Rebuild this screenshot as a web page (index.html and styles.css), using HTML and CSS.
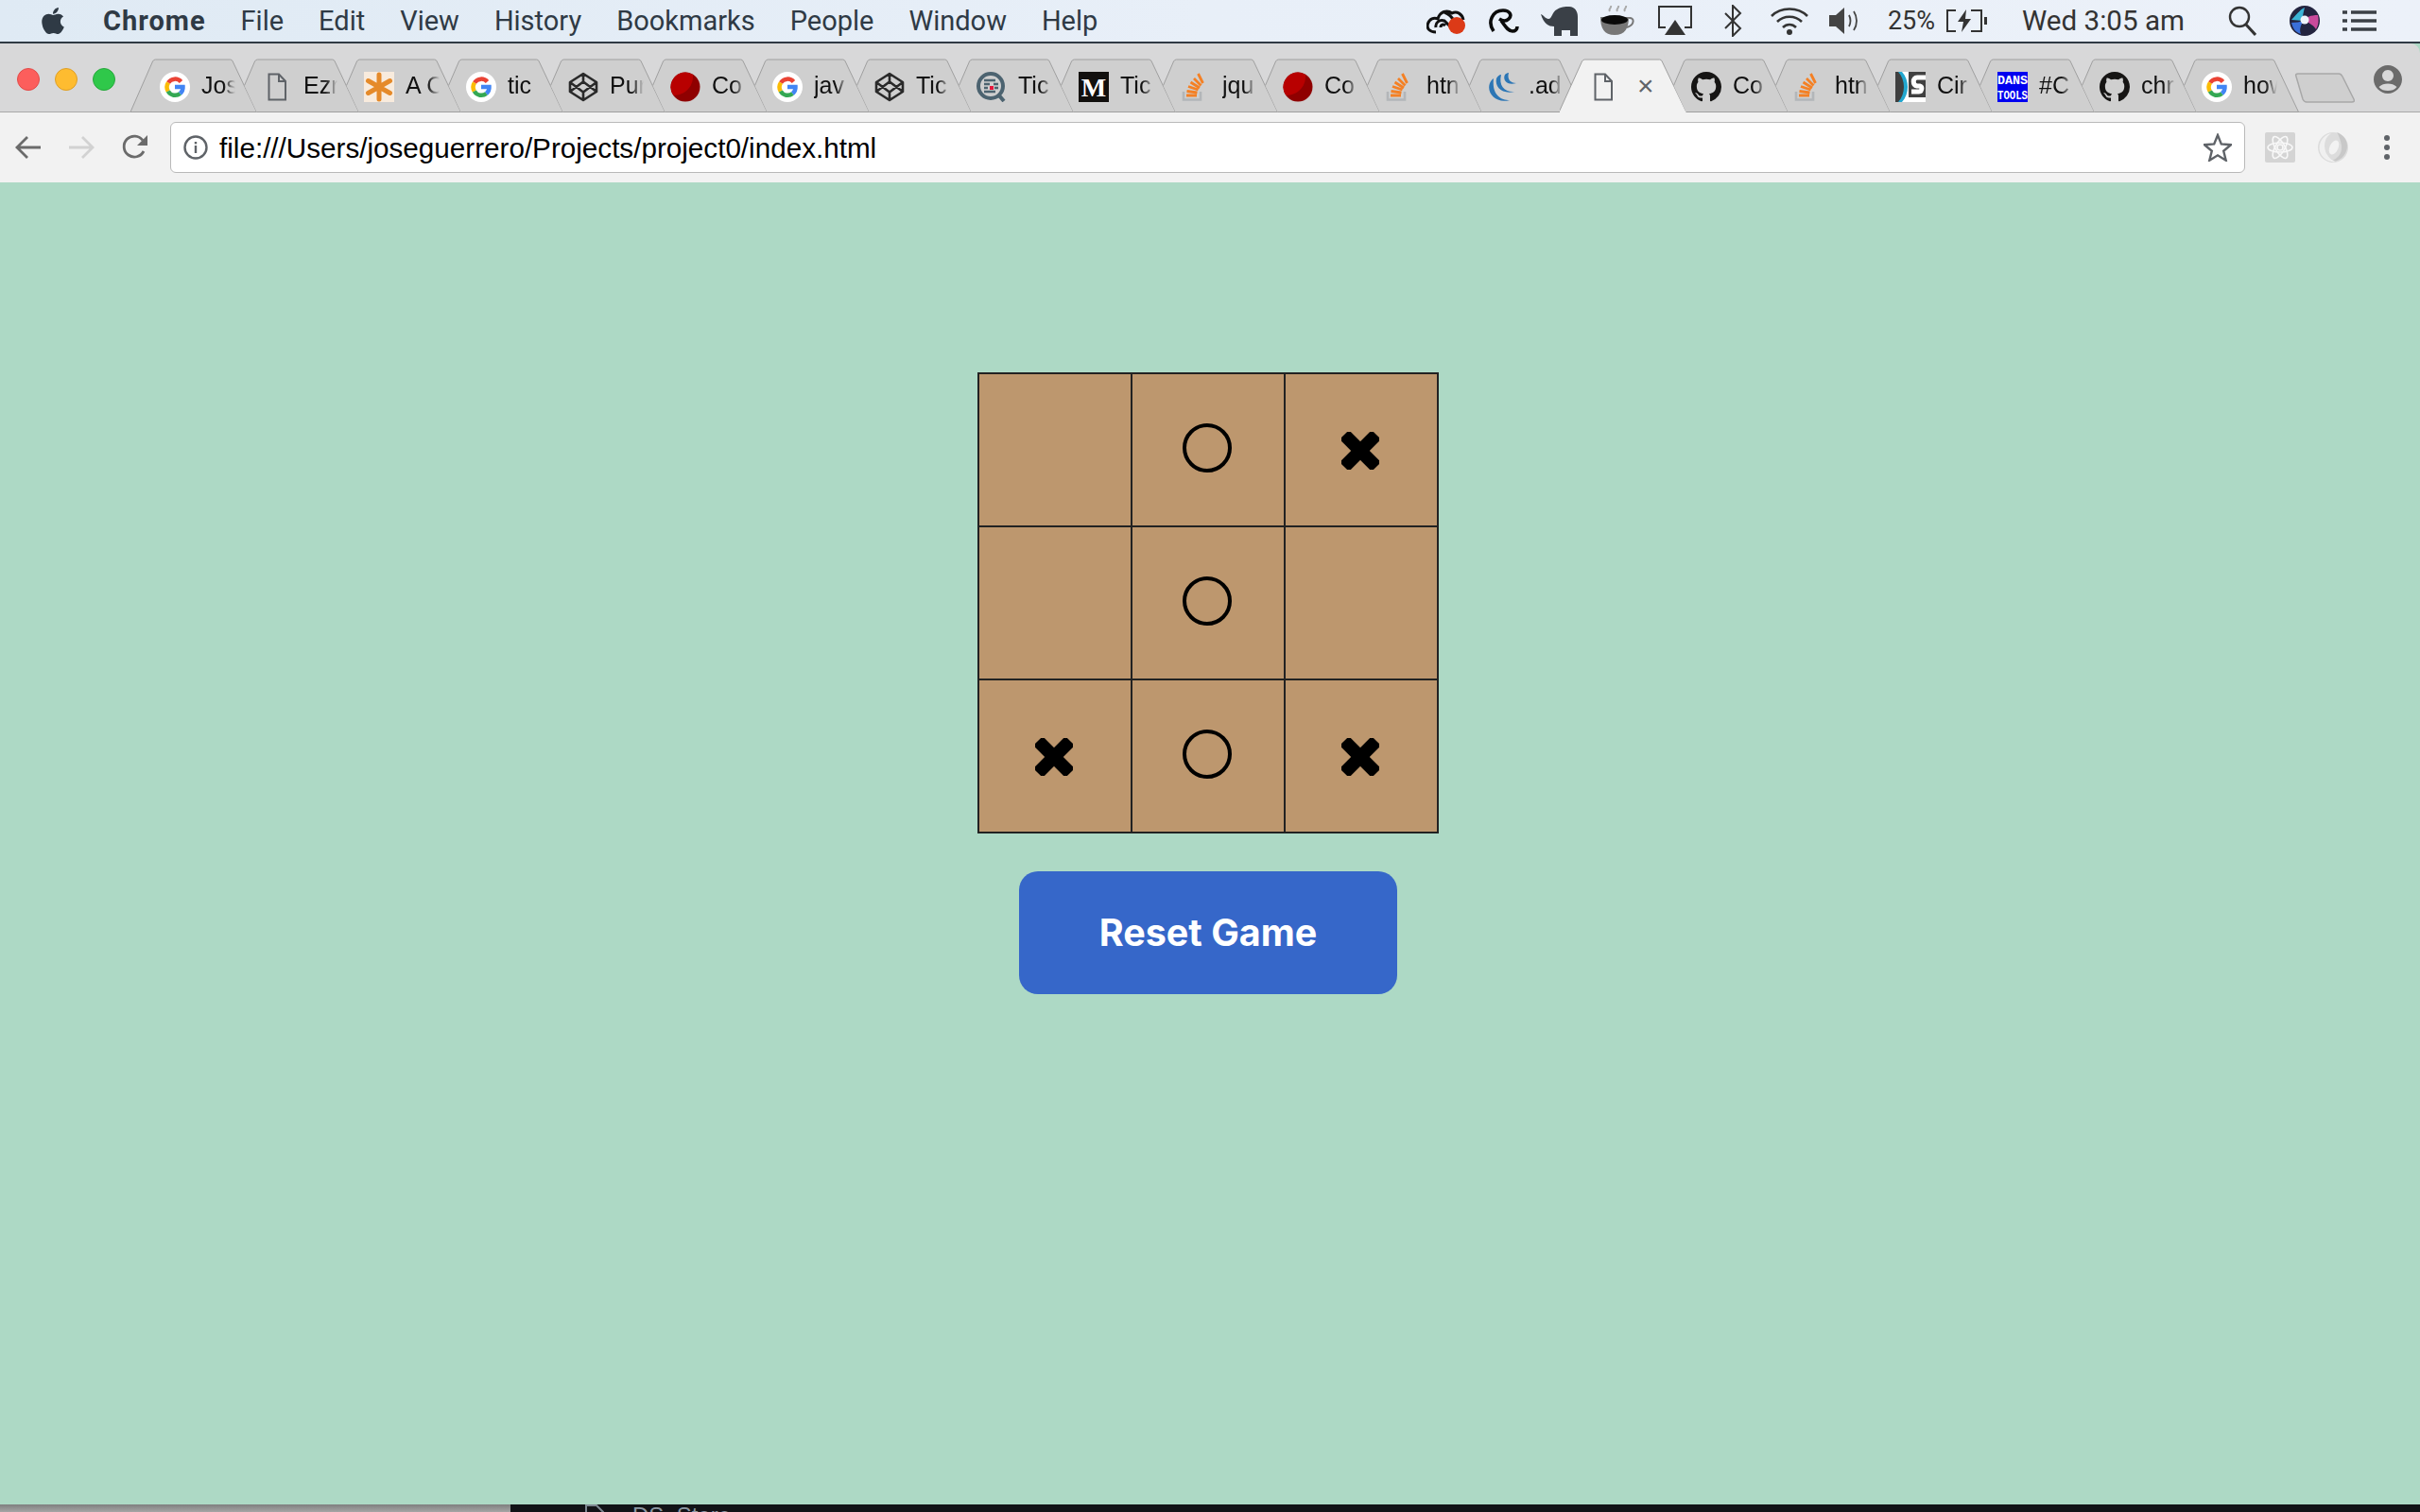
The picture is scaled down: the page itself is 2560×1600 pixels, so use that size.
FILE: index.html
```html
<!DOCTYPE html>
<html lang="en">
  <head>
    <meta charset="UTF-8" />
    <title>Tic Tac Toe</title>
    <link rel="stylesheet" href="styles.css">
  </head>
  <body>
    <svg class="icon-defs" width="0" height="0">
      <symbol id="tab-first" viewBox="0 0 134 57" preserveAspectRatio="none">
        <path d="M0 56.500L23.500 3Q24.500 1 26.500 1H105.500Q107.500 1 108.200 3L133.500 56.500Z" fill="#cfcfcf" stroke="#9f9f9f"/>
      </symbol>
      <symbol id="tab-normal" viewBox="0 0 134 57" preserveAspectRatio="none">
        <path d="M25.500 56.500L12.500 28.500L23.500 3Q24.500 1 26.500 1H105.500Q107.500 1 108.200 3L133.500 56.500Z" fill="#cfcfcf"/>
        <path d="M12.500 28.500L23.500 3Q24.500 1 26.500 1H105.500Q107.500 1 108.200 3L133.500 56.500H25.500" fill="none" stroke="#9f9f9f"/>
      </symbol>
      <symbol id="tab-active" viewBox="0 0 134 57" preserveAspectRatio="none">
        <path d="M-1 57L23.500 3Q24.500 1 26.500 1H105.500Q107.500 1 108.200 3L134 57Z" fill="#f2f2f2" stroke="#9f9f9f"/>
        <rect x="-1" y="55.500" width="136" height="2" fill="#f2f2f2"/>
      </symbol>
      <symbol id="fav-g" viewBox="0 0 32 32">
        <circle cx="16" cy="16" r="16" fill="#fff"/>
        <path d="M9 11.500A8.500 8.500 0 0 1 22.500 10.500" fill="none" stroke="#ea4335" stroke-width="4.500"/>
        <path d="M9 11.500A8.500 8.500 0 0 0 8.800 20.500" fill="none" stroke="#fbbc05" stroke-width="4.500"/>
        <path d="M8.800 20.500A8.500 8.500 0 0 0 21.500 23" fill="none" stroke="#34a853" stroke-width="4.500"/>
        <path d="M21.500 23A8.500 8.500 0 0 0 24.500 16H16" fill="none" stroke="#4285f4" stroke-width="4.500"/>
      </symbol>
      <symbol id="fav-doc" viewBox="0 0 32 32">
        <path d="M7.500 2.500H18L25 10V29.500H7.500ZM18 2.500V10H25" fill="none" stroke="#5f6368" stroke-width="2"/>
      </symbol>
      <symbol id="fav-star" viewBox="0 0 32 32">
        <rect width="32" height="32" fill="#f8ebdd"/>
        <path d="M16 3V29M4.500 9.500L27.500 22.500M27.500 9.500L4.500 22.500" stroke="#e58a2a" stroke-width="5" stroke-linecap="round"/>
      </symbol>
      <symbol id="fav-pen" viewBox="0 0 32 32">
        <path d="M16 2L30 11V21L16 30L2 21V11ZM16 2V10.500M16 21.500V30M2 11L16 21.500L30 11M2 21L16 10.500L30 21" fill="none" stroke="#2a2a2a" stroke-width="2.600" stroke-linejoin="round"/>
      </symbol>
      <symbol id="fav-red" viewBox="0 0 32 32">
        <circle cx="16" cy="16" r="15.500" fill="#8f0000"/>
        <path d="M16 .500A15.500 15.500 0 0 0 3.500 25C16 25 25 15 24 3A15.500 15.500 0 0 0 16 .500Z" fill="#b80000"/>
      </symbol>
      <symbol id="fav-quick" viewBox="0 0 32 32">
        <circle cx="15" cy="15" r="13" fill="none" stroke="#4c6370" stroke-width="4"/>
        <path d="M23 24L29 31" stroke="#4c6370" stroke-width="4"/>
        <path d="M8 9H20M8 13H14M18 13H23M8 17H12M19 17H23M8 21H20" stroke="#4c6370" stroke-width="2.500"/>
        <rect x="14" y="15" width="4" height="4" fill="#e6173d"/>
      </symbol>
      <symbol id="fav-so" viewBox="0 0 32 32">
        <path d="M3 21V29.500H21V21" fill="none" stroke="#b3b6b9" stroke-width="2.600"/>
        <path d="M6 25H17M6.500 20.500L17.500 22M8 15.500L18.500 19M10.500 11L20 17M14 7L21.500 14.500M18.500 2L23.500 12" stroke="#f48024" stroke-width="2.800"/>
      </symbol>
      <symbol id="fav-jq" viewBox="0 0 32 32">
        <path d="M3 12C-1 23 10 34 24 30C14 30 5 24 7 7C5 8 4 10 3 12Z" fill="#2c76b5"/>
        <path d="M10 7C8 16 16 24 29 21C19 22 12 15 15 3C13 3 11 5 10 7Z" fill="#2c76b5"/>
        <path d="M19 3C16 9 22 15 31 12C25 12 21 8 23 1C21 1 20 2 19 3Z" fill="#2c76b5"/>
      </symbol>
      <symbol id="fav-gh" viewBox="0 0 16 16">
        <path d="M8 0C3.580 0 0 3.580 0 8c0 3.540 2.290 6.530 5.470 7.590.4.070.55-.17.55-.38 0-.19-.01-.82-.01-1.490-2.010.37-2.530-.49-2.690-.94-.09-.23-.48-.94-.82-1.130-.28-.15-.68-.52-.01-.53.63-.01 1.080.58 1.230.82.72 1.210 1.870.87 2.330.66.070-.52.28-.87.51-1.070-1.780-.2-3.640-.89-3.640-3.950 0-.87.31-1.590.82-2.150-.08-.2-.36-1.020.08-2.120 0 0 .67-.21 2.200.82.64-.18 1.320-.27 2-.27.68 0 1.360.09 2 .27 1.530-1.040 2.200-.82 2.200-.82.44 1.100.16 1.920.08 2.120.51.56.82 1.270.82 2.150 0 3.070-1.870 3.750-3.650 3.950.29.25.54.73.54 1.480 0 1.070-.01 1.930-.01 2.200 0 .21.15.46.55.38A8.013 8.013 0 0016 8c0-4.420-3.580-8-8-8z" fill="#161514"/>
      </symbol>
      <symbol id="fav-cs" viewBox="0 0 32 32">
        <rect width="32" height="32" fill="#fff"/>
        <rect x="14" width="18" height="27" fill="#404040"/>
        <path d="M0 0H5C12 9 12 23 5 32H0Z" fill="#404040"/>
        <path d="M3 0H7C15 9 15 23 7 32H3C11 23 11 9 3 0Z" fill="#22a7cf"/>
        <path d="M32 6H23C18 6 18 14 23 15H26C29 16 28 21 25 21H17" fill="none" stroke="#fff" stroke-width="5"/>
      </symbol>
      <symbol id="mark-x" viewBox="0 0 40 40">
        <rect x="-4" y="13" width="48" height="14" rx="3" transform="rotate(45 20 20)"/>
        <rect x="-4" y="13" width="48" height="14" rx="3" transform="rotate(-45 20 20)"/>
      </symbol>
    </svg>

    <header class="menubar">
      <svg class="apple" viewBox="0 0 384 512"><path d="M318.700 268.700c-.2-36.700 16.400-64.400 50-84.800-18.800-26.900-47.200-41.700-84.700-44.600-35.500-2.800-74.300 20.700-88.500 20.700-15 0-49.400-19.700-76.400-19.700C63.300 141.200 4 184.800 4 273.500q0 39.300 14.400 81.200c12.800 36.700 59 126.700 107.200 125.200 25.200-.6 43-17.900 75.800-17.900 31.800 0 48.300 17.900 76.400 17.900 48.600-.7 90.400-82.500 102.600-119.300-65.200-30.700-61.700-90-61.700-91.900zm-56.600-164.200c27.300-32.400 24.800-61.900 24-72.500-24.100 1.400-52 16.400-67.900 34.900-17.500 19.800-27.800 44.300-25.600 71.900 26.100 2 49.900-11.400 69.500-34.300z"/></svg>
      <nav class="menu">
        <span class="menu-app">Chrome</span>
        <span>File</span>
        <span>Edit</span>
        <span>View</span>
        <span>History</span>
        <span>Bookmarks</span>
        <span>People</span>
        <span>Window</span>
        <span>Help</span>
      </nav>
      <div class="status">
        <svg class="st st-cloud" viewBox="0 0 42 28">
          <path d="M10 26C3 26 0 22 1.500 17C3 12 8 10 12 12C14 4 22 2 27 6C32 3 38 7 39 13M10 21C9 16 14 12 19 14L26 21M15 21C15 18 18 17 20 19M19 5C24 7 27 10 29 14" fill="none" stroke="#111" stroke-width="3"/>
          <circle cx="32" cy="19" r="9" fill="#dc3a17"/>
        </svg>
        <svg class="st st-avast" viewBox="0 0 34 26">
          <path d="M7 24C0 14 6 2 17 2C24 2 27 7 23 11C20 14 16 13 13 11M15 13C19 18 22 24 27 24C30 24 32 22 32 19" fill="none" stroke="#0b0b0b" stroke-width="3.600"/>
        </svg>
        <svg class="st st-elephant" viewBox="0 0 40 31">
          <path d="M0 8C3 9 5 13 8 13C12 13 12 5 17 3C20 .500 26 0 30 0C36 0 39 5 39 11V31H31V25H22V31H14V21C8 21 3 18 0 8Z" fill="#3a4047"/>
        </svg>
        <svg class="st st-coffee" viewBox="0 0 38 32">
          <path d="M11 6C9 3 13 3 12 0M19 6C17 3 21 3 20 0M27 6C25 3 29 3 28 0" fill="none" stroke="#aaa" stroke-width="2"/>
          <path d="M1 12H31C31 24 27 31 16 31C5 31 1 24 1 12Z" fill="#777"/>
          <ellipse cx="16" cy="15" rx="14" ry="5" fill="#0a0a0a"/>
          <path d="M31 13C37 12 38 20 29 23" fill="none" stroke="#777" stroke-width="2"/>
        </svg>
        <svg class="st st-airplay" viewBox="0 0 36 32">
          <path d="M8 23H1V1H35V23H28" fill="none" stroke="#333" stroke-width="2"/>
          <path d="M18 15L29 31H7Z" fill="#333"/>
        </svg>
        <svg class="st st-bt" viewBox="0 0 20 34">
          <path d="M2 9L18 25L10 33V1L18 9L2 25" fill="none" stroke="#333" stroke-width="2"/>
        </svg>
        <svg class="st st-wifi" viewBox="0 0 42 32">
          <path d="M2 11C12 1 30 1 40 11M8 17C15 10 27 10 34 17M14 23C18 19 24 19 28 23" fill="none" stroke="#333" stroke-width="2.600"/>
          <circle cx="21" cy="28" r="3" fill="#333"/>
        </svg>
        <svg class="st st-vol" viewBox="0 0 34 30">
          <path d="M1 9H8L17 1V29L8 21H1Z" fill="#444"/>
          <path d="M22 9C24 13 24 17 22 21M27 5C31 11 31 19 27 25" fill="none" stroke="#444" stroke-width="1.800"/>
        </svg>
        <span class="st-pct">25%</span>
        <svg class="st st-batt" viewBox="0 0 46 24">
          <path d="M11 1H2V23H11M27 1H38V23H27" fill="none" stroke="#333" stroke-width="2"/>
          <path d="M22 0L13 13H19L17 24L27 10H21Z" fill="#333"/>
          <rect x="41" y="8" width="3" height="8" fill="#333"/>
        </svg>
        <span class="st-time">Wed 3:05 am</span>
        <svg class="st st-search" viewBox="0 0 30 32">
          <circle cx="12" cy="12" r="10" fill="none" stroke="#333" stroke-width="2.400"/>
          <path d="M19 20L29 31" stroke="#333" stroke-width="3"/>
        </svg>
        <svg class="st st-siri" viewBox="0 0 32 32">
          <circle cx="16" cy="16" r="16" fill="#23243f"/>
          <path d="M2 15C10 6 12 4 16 2C14 10 13 14 15 16Z" fill="#3bb4d6"/>
          <path d="M30 10C22 10 18 12 15 16C22 18 26 22 28 25C31 20 31 15 30 10Z" fill="#c94a9b"/>
          <path d="M15 16C12 20 10 25 12 30C5 28 3 22 2 18C7 18 11 17 15 16Z" fill="#3a6fd8"/>
          <circle cx="16" cy="15" r="4.500" fill="#eef4fa"/>
        </svg>
        <svg class="st st-list" viewBox="0 0 36 24">
          <path d="M9 3H36M9 12H36M9 21H36" stroke="#3b4046" stroke-width="3.600"/>
          <path d="M0 3H5M0 12H5M0 21H5" stroke="#3b4046" stroke-width="3.600"/>
        </svg>
      </div>
    </header>

    <div class="tabstrip">
      <div class="lights">
        <i class="light light-red"></i>
        <i class="light light-yellow"></i>
        <i class="light light-green"></i>
      </div>
      <div class="tab"><svg class="tab-shape"><use href="#tab-first"/></svg><svg class="fav"><use href="#fav-g"/></svg><span class="tab-label">Jos</span></div>
      <div class="tab"><svg class="tab-shape"><use href="#tab-normal"/></svg><svg class="fav"><use href="#fav-doc"/></svg><span class="tab-label">Ezr</span></div>
      <div class="tab"><svg class="tab-shape"><use href="#tab-normal"/></svg><svg class="fav"><use href="#fav-star"/></svg><span class="tab-label">A C</span></div>
      <div class="tab"><svg class="tab-shape"><use href="#tab-normal"/></svg><svg class="fav"><use href="#fav-g"/></svg><span class="tab-label">tic</span></div>
      <div class="tab"><svg class="tab-shape"><use href="#tab-normal"/></svg><svg class="fav"><use href="#fav-pen"/></svg><span class="tab-label">Pur</span></div>
      <div class="tab"><svg class="tab-shape"><use href="#tab-normal"/></svg><svg class="fav"><use href="#fav-red"/></svg><span class="tab-label">Co</span></div>
      <div class="tab"><svg class="tab-shape"><use href="#tab-normal"/></svg><svg class="fav"><use href="#fav-g"/></svg><span class="tab-label">jav</span></div>
      <div class="tab"><svg class="tab-shape"><use href="#tab-normal"/></svg><svg class="fav"><use href="#fav-pen"/></svg><span class="tab-label">Tic</span></div>
      <div class="tab"><svg class="tab-shape"><use href="#tab-normal"/></svg><svg class="fav"><use href="#fav-quick"/></svg><span class="tab-label">Tic</span></div>
      <div class="tab"><svg class="tab-shape"><use href="#tab-normal"/></svg><svg class="fav" viewBox="0 0 32 32"><rect width="32" height="32" fill="#12100e"/><text x="16" y="26" text-anchor="middle" class="medium-m">M</text></svg><span class="tab-label">Tic</span></div>
      <div class="tab"><svg class="tab-shape"><use href="#tab-normal"/></svg><svg class="fav"><use href="#fav-so"/></svg><span class="tab-label">jqu</span></div>
      <div class="tab"><svg class="tab-shape"><use href="#tab-normal"/></svg><svg class="fav"><use href="#fav-red"/></svg><span class="tab-label">Co</span></div>
      <div class="tab"><svg class="tab-shape"><use href="#tab-normal"/></svg><svg class="fav"><use href="#fav-so"/></svg><span class="tab-label">htn</span></div>
      <div class="tab"><svg class="tab-shape"><use href="#tab-normal"/></svg><svg class="fav"><use href="#fav-jq"/></svg><span class="tab-label">.ad</span></div>
      <div class="tab tab-current"><svg class="tab-shape"><use href="#tab-active"/></svg><svg class="fav"><use href="#fav-doc"/></svg><span class="tab-close">×</span></div>
      <div class="tab"><svg class="tab-shape"><use href="#tab-normal"/></svg><svg class="fav"><use href="#fav-gh"/></svg><span class="tab-label">Co</span></div>
      <div class="tab"><svg class="tab-shape"><use href="#tab-normal"/></svg><svg class="fav"><use href="#fav-so"/></svg><span class="tab-label">htn</span></div>
      <div class="tab"><svg class="tab-shape"><use href="#tab-normal"/></svg><svg class="fav"><use href="#fav-cs"/></svg><span class="tab-label">Cir</span></div>
      <div class="tab"><svg class="tab-shape"><use href="#tab-normal"/></svg><svg class="fav" viewBox="0 0 32 32"><rect width="32" height="32" fill="#0000f0"/><text x="0" y="13" textLength="32" lengthAdjust="spacingAndGlyphs" class="dans-text">DANS</text><text x="0" y="29" textLength="32" lengthAdjust="spacingAndGlyphs" class="dans-text">TOOLS</text></svg><span class="tab-label">#C</span></div>
      <div class="tab"><svg class="tab-shape"><use href="#tab-normal"/></svg><svg class="fav"><use href="#fav-gh"/></svg><span class="tab-label">chr</span></div>
      <div class="tab"><svg class="tab-shape"><use href="#tab-normal"/></svg><svg class="fav"><use href="#fav-g"/></svg><span class="tab-label">how</span></div>
      <svg class="newtab" viewBox="0 0 64 32"><path d="M2 4C1 2 2 1 4 1H47C49 1 50 2 51 4L63 28C64 30 63 31 61 31H13C11 31 10 30 9 28Z" fill="#cfcfcf" stroke="#a8a8a8" stroke-width="1.500"/></svg>
      <svg class="profile" viewBox="0 0 30 30"><path d="M15 0C23 0 30 7 30 15C30 23 23 30 15 30C7 30 0 23 0 15C0 7 7 0 15 0ZM15 5C11.500 5 9 8 9 11C9 14 11.500 17 15 17C18.500 17 21 14 21 11C21 8 18.500 5 15 5ZM5.500 23C8 26 11 27 15 27C19 27 22 26 24.500 23C22 20.500 18.500 19.500 15 19.500C11.500 19.500 8 20.500 5.500 23Z" fill="#6b6b6b"/></svg>
    </div>

    <div class="toolbar">
      <svg class="tool tool-back" viewBox="0 0 28 26"><path d="M27 13H3M13 2L2 13L13 24" fill="none" stroke="#6b6b6b" stroke-width="2.800"/></svg>
      <svg class="tool tool-forward" viewBox="0 0 28 26"><path d="M1 13H25M15 2L26 13L15 24" fill="none" stroke="#d2d2d2" stroke-width="2.800"/></svg>
      <svg class="tool tool-reload" viewBox="0 0 28 28"><path d="M23 18A11 11 0 1 1 22 6.500" fill="none" stroke="#6b6b6b" stroke-width="2.800"/><path d="M27 1V12H16Z" fill="#6b6b6b"/></svg>
      <div class="urlbar">
        <svg class="url-info" viewBox="0 0 26 26">
          <circle cx="13" cy="13" r="11.500" fill="none" stroke="#5f6368" stroke-width="2.400"/>
          <rect x="11.800" y="11" width="2.400" height="8" fill="#5f6368"/>
          <rect x="11.800" y="7" width="2.400" height="2.400" fill="#5f6368"/>
        </svg>
        <span class="url-text">file:///Users/joseguerrero/Projects/project0/index.html</span>
        <svg class="url-star" viewBox="0 0 30 30"><path d="M15 2L18.800 11.400L29 12.200L21.200 18.800L23.700 28.700L15 23.300L6.300 28.700L8.800 18.800L1 12.200L11.200 11.400Z" fill="none" stroke="#5f6368" stroke-width="2.400"/></svg>
      </div>
      <svg class="ext ext-react" viewBox="0 0 32 32">
        <rect width="32" height="32" rx="2" fill="#d4d4d4"/>
        <g fill="none" stroke="#f8f8f8" stroke-width="1.600">
          <ellipse cx="16" cy="16" rx="13" ry="5"/>
          <ellipse cx="16" cy="16" rx="13" ry="5" transform="rotate(60 16 16)"/>
          <ellipse cx="16" cy="16" rx="13" ry="5" transform="rotate(120 16 16)"/>
        </g>
        <circle cx="16" cy="16" r="3" fill="none" stroke="#f8f8f8" stroke-width="1.600"/>
      </svg>
      <svg class="ext ext-ring" viewBox="0 0 32 32">
        <circle cx="16" cy="16" r="16" fill="#dcdcdc"/>
        <path d="M20 0C29 3 33 12 30 20C27 28 19 32 12 31C20 29 26 23 25 14C24 8 22 3 20 0Z" fill="#c8c8c8"/>
        <path d="M2 20C0 12 5 3 14 1C7 6 6 13 8 20C10 26 15 30 19 31C11 32 4 27 2 20Z" fill="#f0f0f0"/>
        <ellipse cx="17" cy="16" rx="4.500" ry="8" fill="#f2f2f2" transform="rotate(25 17 16)"/>
      </svg>
      <svg class="tool-menu" viewBox="0 0 8 28"><circle cx="4" cy="4" r="3" fill="#5f6368"/><circle cx="4" cy="14" r="3" fill="#5f6368"/><circle cx="4" cy="24" r="3" fill="#5f6368"/></svg>
    </div>

    <main class="page">
      <div class="board">
        <div class="cell"></div>
        <div class="cell"><svg class="mark-o" viewBox="0 0 52 52"><circle cx="26" cy="26" r="24" /></svg></div>
        <div class="cell"><svg class="mark-x"><use href="#mark-x"/></svg></div>
        <div class="cell"></div>
        <div class="cell"><svg class="mark-o" viewBox="0 0 52 52"><circle cx="26" cy="26" r="24" /></svg></div>
        <div class="cell"></div>
        <div class="cell"><svg class="mark-x"><use href="#mark-x"/></svg></div>
        <div class="cell"><svg class="mark-o" viewBox="0 0 52 52"><circle cx="26" cy="26" r="24" /></svg></div>
        <div class="cell"><svg class="mark-x"><use href="#mark-x"/></svg></div>
      </div>
      <button class="reset" type="button">Reset Game</button>
    </main>

    <footer class="under">
      <div class="under-thumb"></div>
      <div class="under-file">
        <svg class="under-icon" viewBox="0 0 20 24"><path d="M1 1H12L19 8V23H1Z" fill="none" stroke="#7d8791" stroke-width="2"/></svg>
        <span>DS_Store</span>
      </div>
    </footer>
  </body>
</html>
```

FILE: styles.css
```css
* {
  box-sizing: border-box;
}
html,
body {
  margin: 0;
  height: 100%;
}
body {
  display: flex;
  flex-direction: column;
  height: 1600px;
  overflow: hidden;
  background-color: #add9c5;
  font-family: "Liberation Sans", Arial, sans-serif;
}
.icon-defs {
  display: block;
  width: 0;
  height: 0;
  flex: none;
}
.medium-m {
  font: bold 28px "Liberation Serif", serif;
  fill: #fff;
}
.dans-text {
  font: bold 13px "Liberation Mono", monospace;
  fill: #fff;
}

/* mac menu bar */
.menubar {
  display: flex;
  align-items: center;
  flex: none;
  height: 46px;
  padding: 0 46px 0 43px;
  border-bottom: 2px solid #303a44;
  background: linear-gradient(90deg, #dfeaf4, #e8eff8 50%, #ecf1f9);
  color: #2f3a45;
  font-family: Roboto, sans-serif;
  font-size: 29px;
}
.apple {
  width: 26px;
  height: 32px;
  fill: #2f3a45;
}
.menu {
  display: flex;
  gap: 37px;
  margin-left: 40px;
}
.menu-app {
  font-weight: 700;
  letter-spacing: 1px;
}
.status {
  display: flex;
  align-items: center;
  margin-left: auto;
  color: #333;
}
.st {
  display: block;
  flex: none;
}
.st-cloud { width: 42px; height: 28px; }
.st-avast { width: 34px; height: 26px; margin-left: 22px; }
.st-elephant { width: 40px; height: 31px; margin-left: 23px; }
.st-coffee { width: 38px; height: 32px; margin-left: 22px; filter: blur(.6px); }
.st-airplay { width: 36px; height: 32px; margin-left: 24px; }
.st-bt { width: 20px; height: 34px; margin-left: 33px; }
.st-wifi { width: 42px; height: 32px; margin-left: 29px; }
.st-vol { width: 34px; height: 30px; margin-left: 20px; }
.st-pct {
  margin-left: 29px;
  font-size: 27px;
}
.st-batt { width: 46px; height: 24px; margin-left: 11px; }
.st-time {
  margin-left: 35px;
  font-size: 29.600px;
}
.st-search { width: 30px; height: 32px; margin-left: 46px; }
.st-siri { width: 32px; height: 32px; margin-left: 35px; }
.st-list { width: 36px; height: 24px; margin-left: 24px; }

/* tab strip */
.tabstrip {
  display: flex;
  align-items: flex-end;
  flex: none;
  height: 73px;
  border-bottom: 1px solid #a9a9a9;
  border-top-right-radius: 10px;
  background-color: #d8d8d9;
}
.lights {
  display: flex;
  align-self: flex-start;
  flex: none;
  gap: 16px;
  width: 138px;
  padding: 26px 0 0 18px;
}
.light {
  display: block;
  width: 24px;
  height: 24px;
  border-radius: 50%;
}
.light-red { background-color: #fc5e5c; border: 1px solid #e24b49; }
.light-yellow { background-color: #febc30; border: 1px solid #de9f26; }
.light-green { background-color: #2fc84a; border: 1px solid #27a83c; }
.tab {
  position: relative;
  display: flex;
  align-items: center;
  flex: none;
  width: 134px;
  height: 57px;
  margin-left: -26px;
  margin-bottom: -1px;
  padding-left: 31px;
  color: #111;
  font-size: 25px;
}
.lights + .tab {
  margin-left: 0;
}
.tab-shape {
  position: absolute;
  left: 0;
  top: 0;
  width: 134px;
  height: 57px;
  overflow: visible;
}
.fav {
  position: relative;
  flex: none;
  width: 32px;
  height: 32px;
  margin-top: 2px;
}
.tab-label {
  position: relative;
  width: 36px;
  margin-left: 12px;
  overflow: hidden;
  white-space: nowrap;
  -webkit-mask-image: linear-gradient(90deg, #000 65%, transparent);
  mask-image: linear-gradient(90deg, #000 65%, transparent);
}
.tab-current {
  padding-left: 30px;
}
.tab-close {
  position: relative;
  margin-left: 20px;
  color: #5f6368;
  font-size: 30px;
  line-height: 1;
}
.newtab {
  flex: none;
  width: 64px;
  height: 32px;
  margin: 0 0 9px -5px;
}
.profile {
  flex: none;
  align-self: flex-start;
  width: 30px;
  height: 30px;
  margin: 23px 0 0 20px;
}

/* toolbar */
.toolbar {
  display: flex;
  align-items: center;
  flex: none;
  height: 74px;
  background-color: #f2f2f2;
}
.tool {
  flex: none;
}
.tool-back {
  width: 28px;
  height: 26px;
  margin-left: 16px;
}
.tool-forward {
  width: 28px;
  height: 26px;
  margin-left: 28px;
}
.tool-reload {
  width: 28px;
  height: 28px;
  margin-left: 29px;
}
.urlbar {
  display: flex;
  align-items: center;
  flex: none;
  width: 2195px;
  height: 54px;
  margin-left: 23px;
  padding: 0 13px 0 13px;
  border: 1px solid #b9b9b9;
  border-radius: 6px;
  background-color: #fff;
}
.url-info {
  width: 26px;
  height: 26px;
}
.url-text {
  margin-left: 12px;
  padding-top: 2px;
  color: #000;
  font-size: 29.650px;
}
.url-star {
  width: 30px;
  height: 30px;
  margin-left: auto;
}
.ext {
  flex: none;
  width: 32px;
  height: 32px;
}
.ext-react {
  margin-left: 21px;
}
.ext-ring {
  margin-left: 24px;
}
.tool-menu {
  flex: none;
  width: 8px;
  height: 28px;
  margin-left: 37px;
}

/* game */
.page {
  display: flex;
  flex: 1;
  flex-direction: column;
  align-items: center;
  padding: 201px 4px 0 0;
  background-color: #add9c5;
}
.board {
  display: grid;
  grid-template-columns: repeat(3, 160px);
  grid-auto-rows: 160px;
  gap: 2px;
  padding: 2px;
  background-color: #222;
}
.cell {
  display: flex;
  align-items: center;
  justify-content: center;
  background-color: #bd976e;
}
.mark-o {
  width: 52px;
  height: 52px;
  margin: 0 3px 4px 0;
  fill: none;
  stroke: #000;
  stroke-width: 4;
}
.mark-x {
  width: 40px;
  height: 40px;
  margin: 2px 3px 0 0;
  fill: #000;
}
.reset {
  width: 400px;
  height: 130px;
  margin-top: 40px;
  border: 0;
  border-radius: 20px;
  background-color: #3667c9;
  color: #fff;
  font-family: Inter, sans-serif;
  font-size: 39.500px;
  font-weight: 700;
}

/* window behind */
.under {
  display: flex;
  flex: none;
  height: 8px;
  overflow: hidden;
  background-color: #121317;
}
.under-thumb {
  width: 540px;
  background: linear-gradient(#7f7f7f, #a5a5a5);
}
.under-file {
  display: flex;
  gap: 30px;
  margin-left: 79px;
  color: #8d98a3;
  font-size: 24px;
  line-height: 24px;
}
.under-icon {
  width: 20px;
  height: 24px;
}
```
